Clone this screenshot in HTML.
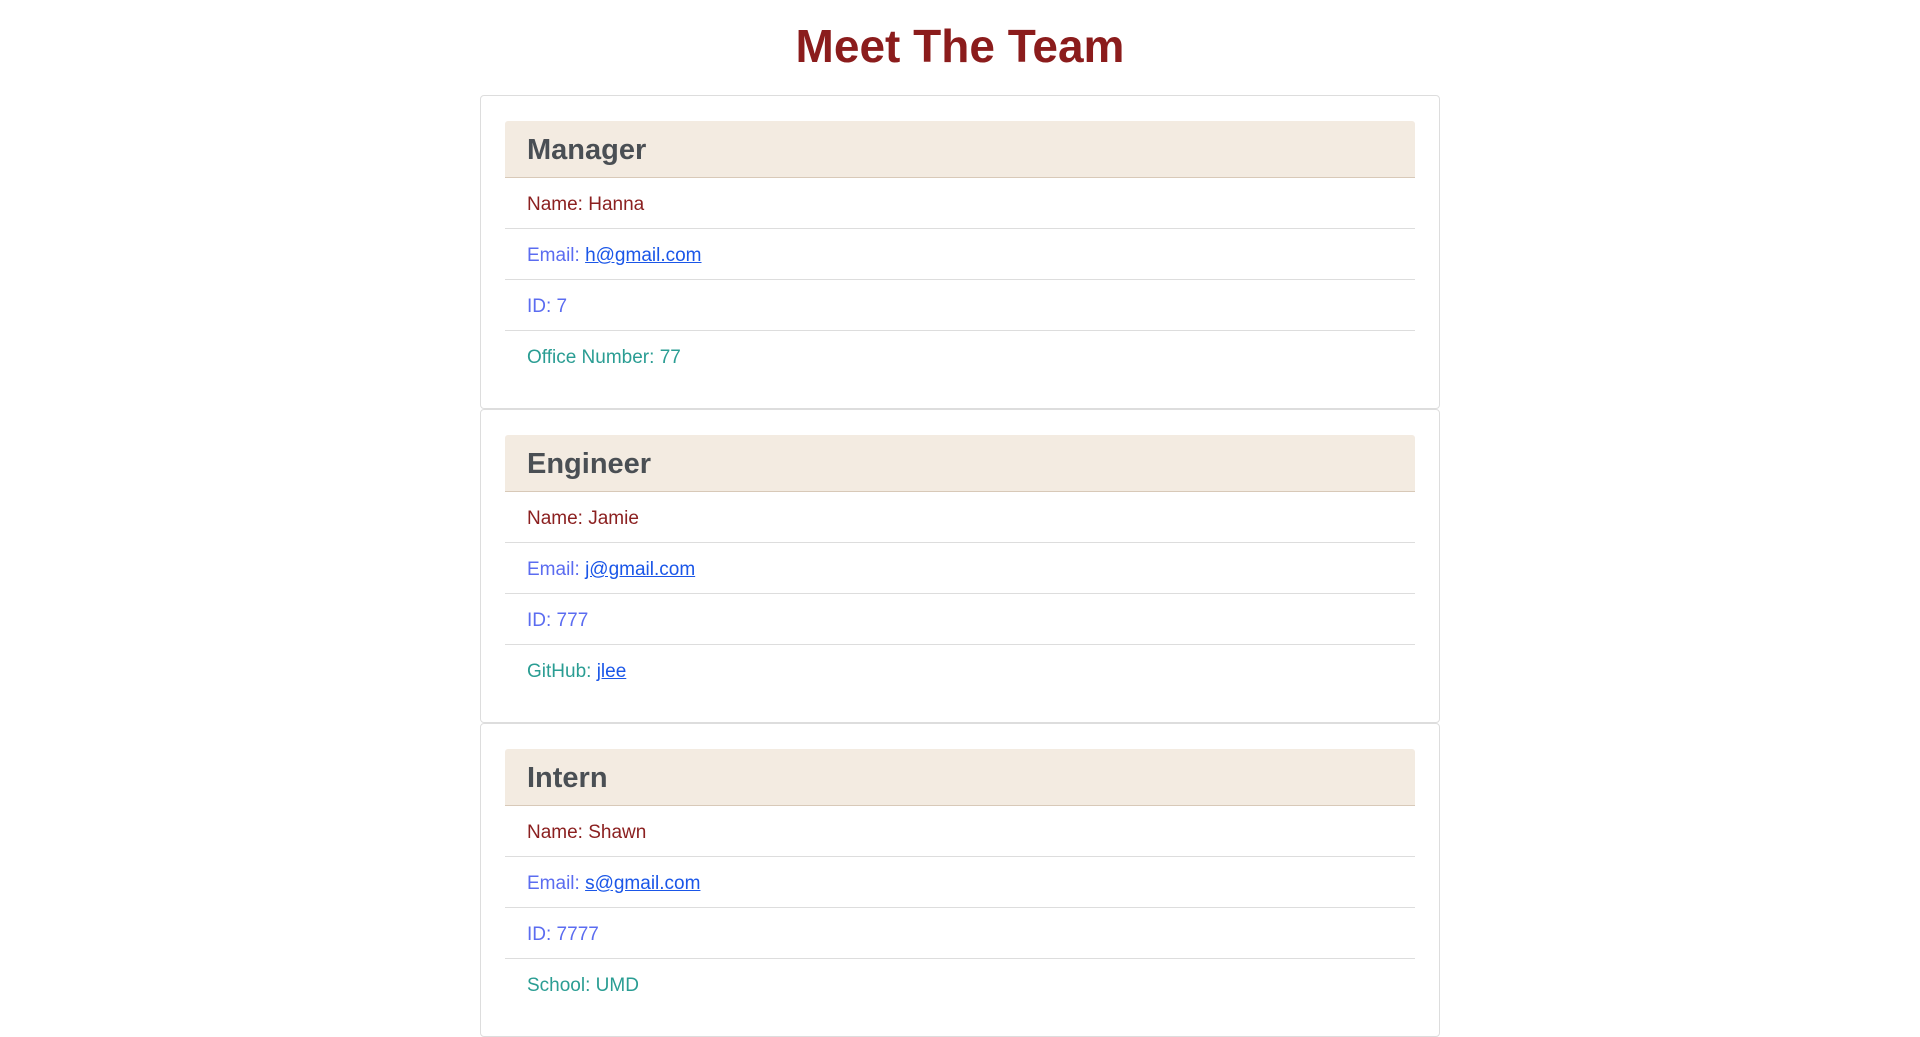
<!DOCTYPE html>
<html><head><meta charset="utf-8"><style>
*{box-sizing:border-box;margin:0;padding:0}
body{width:1920px;height:1036px;background:#fff;font-family:"Liberation Sans",sans-serif;overflow:hidden}
h1{text-align:center;color:#8b1c1c;font-size:46px;font-weight:bold;height:95px;line-height:92px}
.card{width:960px;margin:0 auto;border:1px solid #ddd;border-radius:4px;padding:25px 24px 24px;height:314px}
.hd{background:#f3ebe1;height:57px;border-bottom:1px solid #d8c9b8;padding-left:22px;font-size:29px;font-weight:bold;color:#4a4f54;line-height:58px;border-radius:3px 3px 0 0}
.row{height:51px;border-bottom:1px solid #ddd;padding-left:22px;line-height:53px;font-size:19px}
.row:last-child{border-bottom:none}
.n{color:#8b2020}.e{color:#5b6cf0}.o{color:#2a9d93}
a{color:#1a56e8;text-decoration:underline}
</style></head><body>
<h1>Meet The Team</h1>
<div class="card"><div class="hd">Manager</div>
<div class="row n">Name: Hanna</div><div class="row e">Email: <a>h@gmail.com</a></div><div class="row e">ID: 7</div><div class="row o">Office Number: 77</div></div>
<div class="card"><div class="hd">Engineer</div>
<div class="row n">Name: Jamie</div><div class="row e">Email: <a>j@gmail.com</a></div><div class="row e">ID: 777</div><div class="row o">GitHub: <a>jlee</a></div></div>
<div class="card"><div class="hd">Intern</div>
<div class="row n">Name: Shawn</div><div class="row e">Email: <a>s@gmail.com</a></div><div class="row e">ID: 7777</div><div class="row o">School: UMD</div></div>
</body></html>
